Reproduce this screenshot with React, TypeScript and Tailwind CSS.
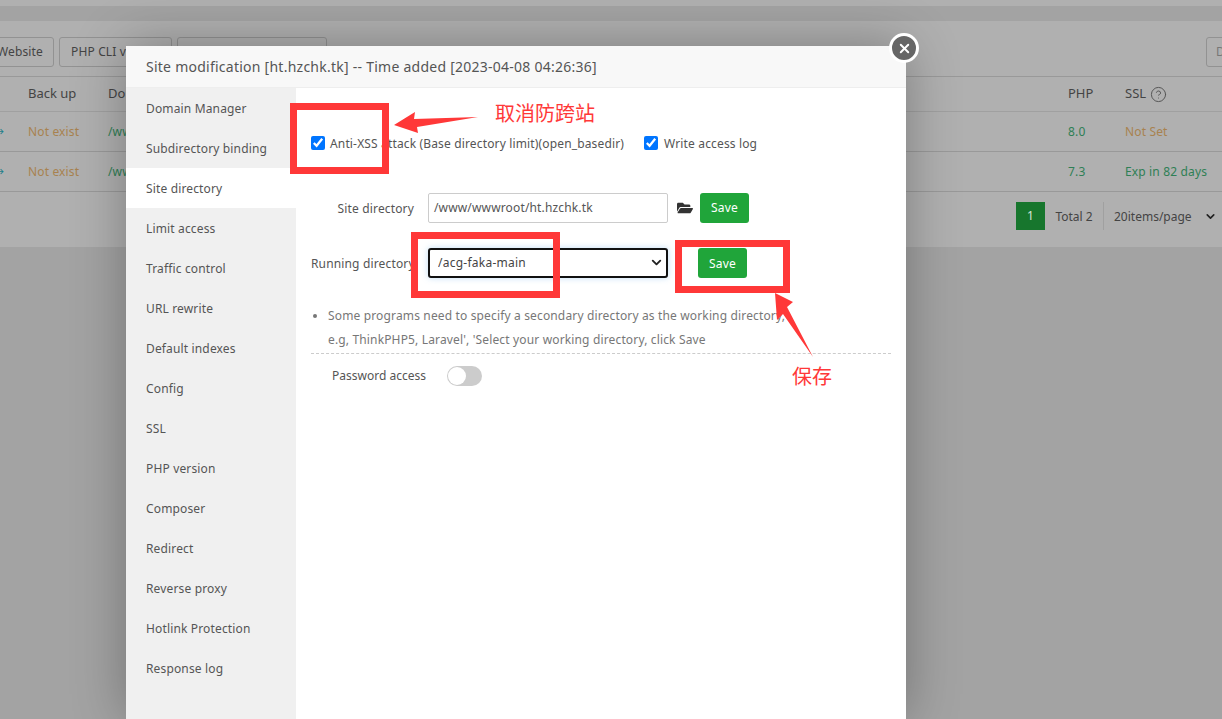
import React from 'react';
import { FaFolderOpen } from 'react-icons/fa';
import { CircleHelp, X, ChevronDown } from 'lucide-react';

const font = { fontFamily: '"Noto Sans", "Noto Sans CJK SC", sans-serif' };

const menu = [
  'Domain Manager',
  'Subdirectory binding',
  'Site directory',
  'Limit access',
  'Traffic control',
  'URL rewrite',
  'Default indexes',
  'Config',
  'SSL',
  'PHP version',
  'Composer',
  'Redirect',
  'Reverse proxy',
  'Hotlink Protection',
  'Response log',
];

const rows = [
  { php: '8.0', ssl: 'Not Set', sslClass: 'text-[#a8824f]' },
  { php: '7.3', ssl: 'Exp in 82 days', sslClass: 'text-[#2f7f55]' },
];

const Background = () => (
  <div className="h-[719px] bg-[#a3a3a3] overflow-hidden">
    <div className="h-[6px] bg-[#b0b0b0]" />
    <div className="h-[15px] bg-[#a3a3a3]" />
    <div className="h-[226px] bg-[#b0b0b0]">
      {/* Toolbar */}
      <div className="h-[56px] pt-[6px] flex items-center justify-between border-b border-[#999]">
        <div className="flex items-center gap-[5px] ml-[-10px]">
          <div className="h-[30px] w-[64px] border border-[#929292] rounded-[3px] flex items-center justify-end pr-[10px] text-[12px] tracking-[0.15px] text-[#444]">
            Website
          </div>
          <div className="h-[30px] w-[113px] border border-[#929292] rounded-[3px] flex items-center pl-[11px] text-[12px] tracking-[0.15px] text-[#444] whitespace-nowrap">
            PHP CLI version
          </div>
          <div className="h-[30px] w-[150px] border border-[#929292] rounded-[3px]" />
        </div>
        <div className="h-[30px] w-[30px] mr-[-14px] border border-[#929292] rounded-[3px] pl-[9px] flex items-center text-[12px] text-[#777]">
          D
        </div>
      </div>
      {/* Table head */}
      <div className="h-[35px] grid grid-cols-[28px_80px_960px_57px_1fr] items-center border-b border-[#a0a0a0] text-[13px] text-[#444]">
        <span />
        <span>Back up</span>
        <span>Do</span>
        <span>PHP</span>
        <span className="flex items-center gap-[4px]">
          SSL <CircleHelp className="w-[17px] h-[17px] text-[#555]" strokeWidth={1.4} />
        </span>
      </div>
      {rows.map((r) => (
        <div
          key={r.php}
          className="h-[40px] grid grid-cols-[28px_80px_960px_57px_1fr] items-center border-b border-[#999] text-[12px] tracking-[0.15px]"
        >
          <span className="text-[#1f7f8a] leading-none ml-[-7px] text-[11px]">→</span>
          <span className="text-[#a8824f]">Not exist</span>
          <span className="text-[#2f7f55]">/www</span>
          <span className="text-[#2f7f55]">{r.php}</span>
          <span className={r.sslClass}>{r.ssl}</span>
        </div>
      ))}
      {/* Pagination */}
      <div className="flex justify-end mt-[10px] text-[12px] text-[#444]">
        <div className="w-[29px] h-[28px] bg-[#17762d] text-[#d8e6da] flex items-center justify-center">1</div>
        <div className="w-[59px] h-[28px] pt-[1px] bg-[#b0b0b0] border-r border-[#a0a0a0] flex items-center justify-center">
          Total 2
        </div>
        <div className="w-[118px] h-[28px] pt-[1px] flex items-center pl-[10px] gap-[12px] whitespace-nowrap">
          20items/page
          <ChevronDown className="w-[13px] h-[13px] text-[#222]" strokeWidth={3} />
        </div>
      </div>
    </div>
  </div>
);

const Modal = () => (
  <div className="absolute left-[126px] top-[46px] w-[780px] h-[673px] bg-white shadow-[0_0_50px_rgba(0,0,0,0.3)]">
    <div className="h-[42px] bg-[#f8f8f8] border-b border-[#eeeeee] pl-[20px] flex items-center text-[14px] tracking-[0.25px] text-[#555] whitespace-nowrap">
      Site modification [ht.hzchk.tk] -- Time added [2023-04-08 04:26:36]
    </div>
    <div className="flex h-[631px]">
      <div className="w-[170px] bg-[#f0f0f0] shrink-0">
        {menu.map((m) => (
          <div
            key={m}
            className={`h-[40px] pl-[20px] pt-[2px] flex items-center text-[12px] tracking-[0.15px] text-[#555] ${
              m === 'Site directory' ? 'bg-white' : ''
            }`}
          >
            {m}
          </div>
        ))}
      </div>
      <div className="flex-1 pl-[15px] pr-[15px] text-[12px] tracking-[0.15px] text-[#555]">
        <div className="flex items-center h-[20px] mt-[45px]">
          <input type="checkbox" checked readOnly className="w-[14px] h-[14px] accent-[#0075ff] m-0" />
          <span className="ml-[5px] pt-[1px]">Anti-XSS attack (Base directory limit)(open_basedir)</span>
          <input type="checkbox" checked readOnly className="w-[14px] h-[14px] accent-[#0075ff] ml-[20px]" />
          <span className="ml-[6px] pt-[1px]">Write access log</span>
        </div>
        <div className="flex items-center mt-[40px] h-[30px]">
          <span className="w-[103px] text-right shrink-0 pt-[1px]">Site directory</span>
          <div className="ml-[14px] w-[240px] h-[30px] border border-[#cccccc] rounded-[2px] pl-[5px] flex items-center">
            /www/wwwroot/ht.hzchk.tk
          </div>
          <FaFolderOpen className="ml-[9px] w-[16px] h-[16px] text-[#333]" />
          <button className="ml-[7px] w-[49px] h-[30px] bg-[#20a53a] text-white rounded-[3px] text-[12px]">Save</button>
        </div>
        <div className="flex items-center mt-[25px] h-[30px]">
          <span className="w-[103px] text-right shrink-0 whitespace-nowrap pt-[1px]">Running directory</span>
          <div className="relative ml-[14px] w-[240px] h-[30px]">
            <select
              defaultValue="/acg-faka-main"
              className="appearance-none w-full h-full border-2 border-[#111] rounded-[3px] pl-[8px] bg-white text-[12px] tracking-[0.25px] text-[#444] shadow-[0_0_6px_rgba(102,175,233,0.4)]"
            >
              <option>/acg-faka-main</option>
            </select>
            <ChevronDown className="absolute right-[4px] top-[7px] w-[15px] h-[15px] text-[#222]" strokeWidth={3} />
          </div>
          <button className="ml-[30px] w-[49px] h-[30px] pt-[1px] bg-[#20a53a] text-white rounded-[3px] text-[12px]">Save</button>
        </div>
        <ul className="mt-[26px] text-[#777] leading-[24px] list-disc pl-[17px] whitespace-nowrap">
          <li>Some programs need to specify a secondary directory as the working directory,</li>
          <li className="list-none">e.g, ThinkPHP5, Laravel', 'Select your working directory, click Save</li>
        </ul>
        <div className="border-t border-dashed border-[#cccccc] mt-[1px] flex items-center h-[45px] pl-[21px]">
          <span className="tracking-normal">Password access</span>
          <span className="ml-[21px] w-[35px] h-[20px] rounded-full bg-[#cccccc] flex items-center pl-[1px]">
            <span className="w-[18px] h-[18px] rounded-full bg-white" />
          </span>
        </div>
      </div>
    </div>
    {/* Close button */}
    <div className="absolute right-[-13px] top-[-13px] w-[30px] h-[30px] rounded-full bg-[#666] border-[3px] border-white flex items-center justify-center">
      <X className="w-[15px] h-[15px] text-white" strokeWidth={3} />
    </div>
  </div>
);

// red markup drawn on top of the screenshot
const Annotations = () => (
  <>
    <div className="absolute left-[290px] top-[103px] w-[99px] h-[71px] border-[7px] border-[#ff3838]" />
    <div className="absolute left-[411px] top-[232px] w-[149px] h-[66px] border-[7px] border-[#ff3838]" />
    <div className="absolute left-[675px] top-[240px] w-[115px] h-[53px] border-[7px] border-[#ff3838]" />
    <svg className="absolute left-0 top-0 w-[1222px] h-[719px] pointer-events-none" viewBox="0 0 1222 719">
      <polygon points="394,125 415,112 414,119 478,117 417,127 418,133" fill="#ff3838" />
      <polygon points="775,293 793,302 787,307 813,357 783,314 777,320" fill="#ff3838" />
    </svg>
    <div className="absolute left-[495px] top-[100px] text-[20px] leading-[28px] text-[#ff3838] whitespace-nowrap">
      取消防跨站
    </div>
    <div className="absolute left-[792px] top-[363px] text-[20px] leading-[28px] text-[#ff3838] whitespace-nowrap">
      保存
    </div>
  </>
);

export default function App() {
  return (
    <div className="relative w-[1222px] h-[719px] overflow-hidden" style={font}>
      <Background />
      <Modal />
      <Annotations />
    </div>
  );
}
